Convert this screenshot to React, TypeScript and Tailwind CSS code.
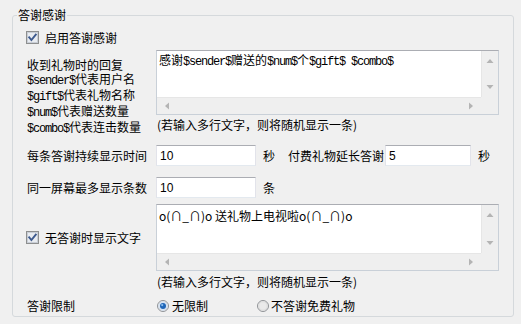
import React from "react";

function Mix({ text }: { text: string }) {
  const parts = text.split(/([\x20-\x7e]+)/).filter(Boolean);
  return (
    <>
      {parts.map((p, i) =>
        /^[\x20-\x7e]+$/.test(p) ? (
          <span key={i} className="font-['Liberation_Mono',monospace] tracking-[-1.2px]">
            {p}
          </span>
        ) : (
          <span key={i}>{p}</span>
        )
      )}
    </>
  );
}

function CheckBox() {
  return (
    <svg width="13" height="13" viewBox="0 0 13 13" className="shrink-0">
      <rect x="0.5" y="0.5" width="12" height="12" fill="#f6f6f6" stroke="#8e8f8f" />
      <rect x="1.5" y="1.5" width="10" height="10" fill="#e9ecf1" stroke="#c9ced6" />
      <path d="M3.2 6.4 L5.4 9 L9.8 3.6" stroke="#3e5a8e" strokeWidth="1.9" fill="none" strokeLinecap="square" />
    </svg>
  );
}

function Radio({ on }: { on?: boolean }) {
  return (
    <svg width="12" height="12" viewBox="0 0 12 12" className="shrink-0">
      <circle cx="6" cy="6" r="5.5" fill="#f2f2f2" stroke="#8f9296" />
      <circle cx="6" cy="6" r="4.3" fill={on ? "#dfe9f5" : "#eaeaea"} stroke={on ? "#c6d6e8" : "#d6d6d6"} strokeWidth="0.8" />
      {on && <circle cx="6" cy="6" r="3" fill="#1f66b8" />}
      {on && <circle cx="5.2" cy="5.1" r="1.1" fill="#8ec1f0" />}
    </svg>
  );
}

function Arrow({ dir }: { dir: "up" | "down" | "left" | "right" }) {
  const d =
    dir === "up"
      ? "M5 2 L8.5 6 L1.5 6 Z"
      : dir === "down"
      ? "M1.5 2 L8.5 2 L5 6 Z"
      : dir === "left"
      ? "M2 5 L6 1.5 L6 8.5 Z"
      : "M2 1.5 L6 5 L2 8.5 Z";
  const w = dir === "up" || dir === "down" ? 10 : 8;
  const h = dir === "up" || dir === "down" ? 8 : 10;
  return (
    <svg width={w} height={h} viewBox={`0 0 ${w} ${h}`}>
      <path d={d} fill="#b4b4b4" />
    </svg>
  );
}

function ScrollBox({ box, children }: { box: string; children: React.ReactNode }) {
  return (
    <div
      className={
        box +
        " w-[343px] border border-[#c9d0d8] border-t-[#abadb3] bg-white grid grid-cols-[1fr_17px] grid-rows-[1fr_17px] overflow-hidden"
      }
    >
      <div className="overflow-hidden whitespace-nowrap">{children}</div>
      <div className="bg-[#efefef] border-l border-[#e6e6e6] flex flex-col justify-between items-center py-[6px]">
        <Arrow dir="up" />
        <Arrow dir="down" />
      </div>
      <div className="bg-[#efefef] border-t border-[#e6e6e6] flex justify-between items-center px-[6px]">
        <Arrow dir="left" />
        <Arrow dir="right" />
      </div>
      <div className="bg-[#efefef]" />
    </div>
  );
}

function Input({ w, value }: { w: string; value: string }) {
  return (
    <div
      className={
        w +
        " h-[21px] bg-white border border-[#e2e3ea] border-t-[#abadb3] border-b-[#e3e9ef] pl-[3px] flex items-center font-['Liberation_Sans',sans-serif] text-[12px]"
      }
    >
      {value}
    </div>
  );
}

export default function App() {
  return (
    <div className="w-[521px] h-[324px] bg-[#f0f0f0] pt-[7px] pl-[12px] text-[12px] leading-[14px] text-black font-['Noto_Sans_CJK_SC','Liberation_Sans',sans-serif]">
      <fieldset className="w-[502px] h-[310px] border border-[#d5d9dc] rounded-[3px] m-0 p-0 min-w-0">
        <legend className="ml-[4px] px-[1px] leading-[16px] text-[12px]">答谢感谢</legend>
        <div className="pl-[14px]">
          <div className="mt-[8px] h-[13px] flex items-center gap-[6px] ml-[-1px]">
            <CheckBox />
            <span>启用答谢感谢</span>
          </div>

          <div className="mt-[6px] flex">
            <div className="w-[129px] pt-[8px] flex flex-col">
              <span>收到礼物时的回复</span>
              <span>
                <Mix text="$sender$代表用户名" />
              </span>
              <span>
                <Mix text="$gift$代表礼物名称" />
              </span>
              <span>
                <Mix text="$num$代表赠送数量" />
              </span>
              <span>
                <Mix text="$combo$代表连击数量" />
              </span>
            </div>
            <div className="flex flex-col">
              <ScrollBox box="h-[65px]">
                <div className="pl-[2px] pt-[2px]">
                  <Mix text="感谢$sender$赠送的$num$个$gift$ $combo$" />
                </div>
              </ScrollBox>
              <span className="mt-[3px] ml-[1px]">(若输入多行文字，则将随机显示一条)</span>
            </div>
          </div>

          <div className="mt-[9px] h-[21px] flex items-center">
            <span className="w-[129px]">每条答谢持续显示时间</span>
            <Input w="w-[100px]" value="10" />
            <span className="ml-[7px]">秒</span>
            <span className="ml-[13px]">付费礼物延长答谢</span>
            <div className="ml-[1px]">
              <Input w="w-[86px]" value="5" />
            </div>
            <span className="ml-[7px]">秒</span>
          </div>

          <div className="mt-[11px] h-[21px] flex items-center">
            <span className="w-[129px]">同一屏幕最多显示条数</span>
            <Input w="w-[100px]" value="10" />
            <span className="ml-[7px]">条</span>
          </div>

          <div className="mt-[6px] flex">
            <div className="w-[129px] h-[67px] flex items-center gap-[6px] ml-[-1px]">
              <CheckBox />
              <span>无答谢时显示文字</span>
            </div>
            <div className="flex flex-col ml-[1px]">
              <ScrollBox box="h-[67px]">
                <div className="pl-[2px] pt-[3px] text-[12px] leading-[16px]">o(∩_∩)o 送礼物上电视啦o(∩_∩)o</div>
              </ScrollBox>
              <span className="mt-[4px] ml-[1px]">(若输入多行文字，则将随机显示一条)</span>
            </div>
          </div>

          <div className="mt-[10px] h-[14px] flex items-center">
            <span className="w-[130px]">答谢限制</span>
            <Radio on />
            <span className="ml-[3px]">无限制</span>
            <div className="ml-[49px]">
              <Radio />
            </div>
            <span className="ml-[2px]">不答谢免费礼物</span>
          </div>
        </div>
      </fieldset>
    </div>
  );
}
